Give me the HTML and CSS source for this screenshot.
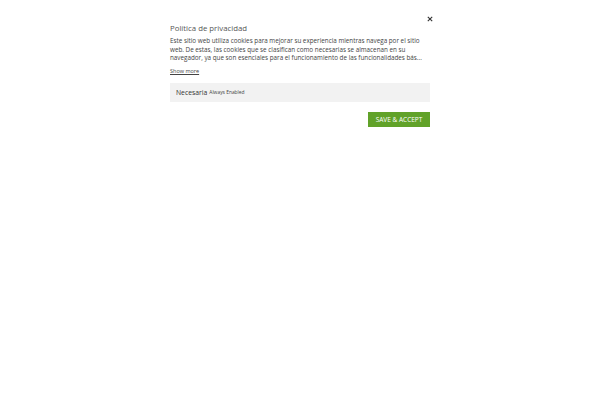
FILE: index.html
```html
<!DOCTYPE html>
<html lang="es">
<head>
<meta charset="utf-8">
<link rel="stylesheet" href="styles.css">
</head>
<body>
<div class="modal">
  <div class="close-row">
    <button class="close" aria-label="Close">
      <svg width="6" height="6" viewBox="0 0 6 6"><path d="M0.8 0.8L5.2 5.2M5.2 0.8L0.8 5.2" stroke="#333" stroke-width="1.1"/></svg>
    </button>
  </div>
  <h2 class="title">Política de privacidad</h2>
  <p class="desc">Este sitio web utiliza cookies para mejorar su experiencia mientras navega por el sitio web. De estas, las cookies que se clasifican como necesarias se almacenan en su navegador, ya que son esenciales para el funcionamiento de las funcionalidades bás...</p>
  <a class="more" href="#">Show more</a>
  <div class="category">
    <span class="cat-name">Necesaria</span>
    <span class="cat-state">Always Enabled</span>
  </div>
  <div class="actions">
    <button class="accept">SAVE &amp; ACCEPT</button>
  </div>
</div>
</body>
</html>
```
FILE: styles.css
```css
html, body {
  margin: 0;
  padding: 0;
  background: #ffffff;
}
body {
  font-family: "Open Sans", "Liberation Sans", sans-serif;
  color: #444;
}
.modal {
  width: 260px;
  margin: 0 auto;
  padding: 15px 20px 0;
  display: flex;
  flex-direction: column;
}
.close-row {
  display: flex;
  justify-content: flex-end;
  height: 8px;
}
.close {
  border: 0;
  background: none;
  padding: 0;
  width: 6px;
  height: 8px;
  margin-right: -3px;
  display: flex;
  align-items: center;
  cursor: pointer;
}
.title {
  margin: 0;
  font-size: 7.8px;
  font-weight: 400;
  color: #555;
  line-height: 10px;
}
.desc {
  margin: 4px 0 0;
  font-size: 6.3px;
  line-height: 8.5px;
  color: #444;
}
.more {
  margin-top: 4px;
  font-size: 5.5px;
  color: #444;
  text-decoration: underline;
  line-height: 8px;
  align-self: flex-start;
}
.category {
  margin-top: 8px;
  background: #f2f2f2;
  height: 19px;
  padding: 0 6px;
  display: flex;
  align-items: center;
  gap: 2px;
}
.cat-name {
  font-size: 6.8px;
  color: #333;
}
.cat-state {
  font-size: 4.9px;
  color: #444;
}
.actions {
  margin-top: 10px;
  display: flex;
  justify-content: flex-end;
}
.accept {
  border: 0;
  background: #61a229;
  color: #fff;
  font-family: "Open Sans", "Liberation Sans", sans-serif;
  font-size: 6.5px;
  height: 15px;
  width: 62px;
  padding: 0;
  cursor: pointer;
}
```
